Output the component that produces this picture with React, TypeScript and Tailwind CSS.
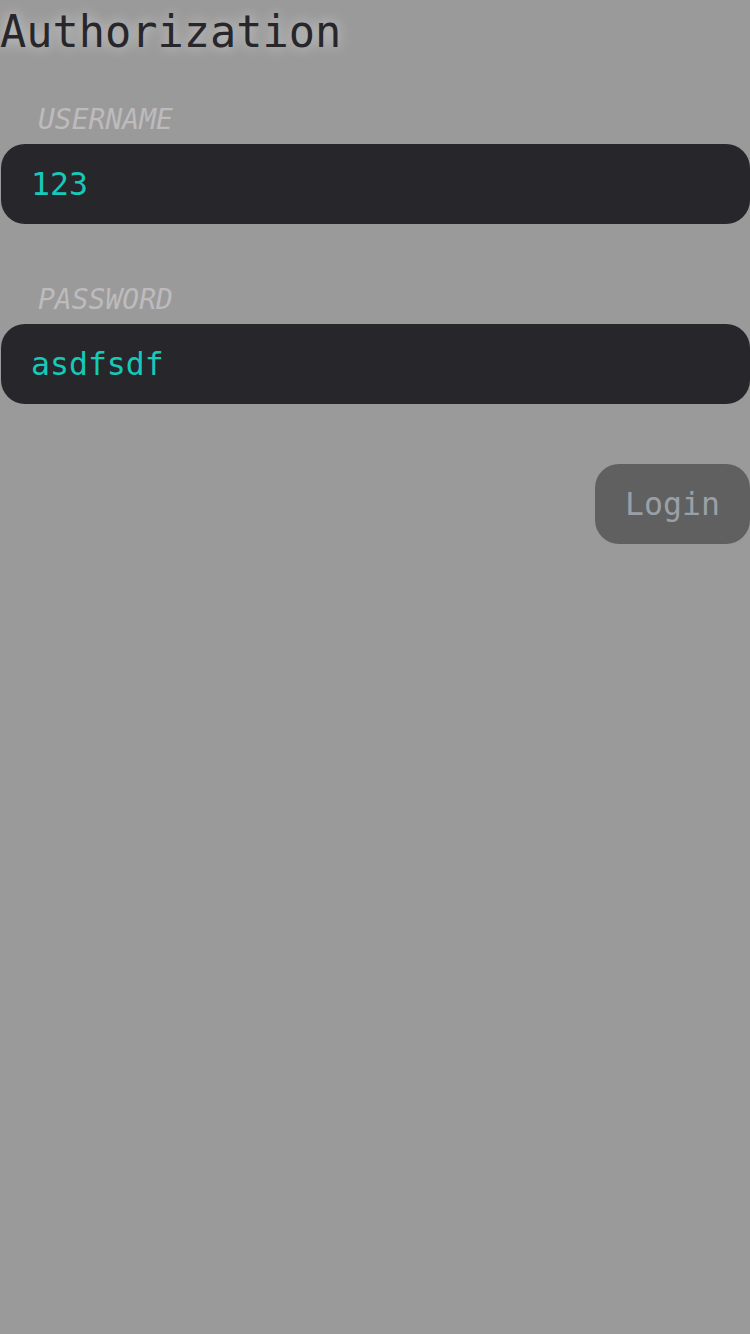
import { useState } from 'react';

const mono = { fontFamily: '"DejaVu Sans Mono", monospace' };

const Field = ({ label, value, onChange }: { label: string; value: string; onChange: (v: string) => void }) => (
  <div className="flex flex-col">
    <label className="pl-[38px] text-[28px] leading-[32px] italic text-[#bdbbbd]">{label}</label>
    <input
      value={value}
      onChange={(e) => onChange(e.target.value)}
      className="mt-[8px] ml-[1px] h-[80px] rounded-[24px] bg-[#27262b] px-[30px] text-[31.5px] text-[#16c9b9] outline-none"
      style={mono}
    />
  </div>
);

export default function App() {
  const [username, setUsername] = useState('123');
  const [password, setPassword] = useState('asdfsdf');

  return (
    <div className="min-h-[1334px] w-full bg-[#9a9a9a]" style={mono}>
      <h1 className="text-[43.6px] text-[#27262b] [text-shadow:0_0_14px_rgba(255,255,255,0.6)]">
        Authorization
      </h1>

      <div className="mt-[39px] flex flex-col gap-[60px]">
        <Field label="USERNAME" value={username} onChange={setUsername} />
        <Field label="PASSWORD" value={password} onChange={setPassword} />
      </div>

      <div className="mt-[60px] flex justify-end">
        <button className="h-[80px] w-[155px] rounded-[24px] bg-[#606060] text-[31.5px] text-[#9aa0a8]">
          Login
        </button>
      </div>
    </div>
  );
}
